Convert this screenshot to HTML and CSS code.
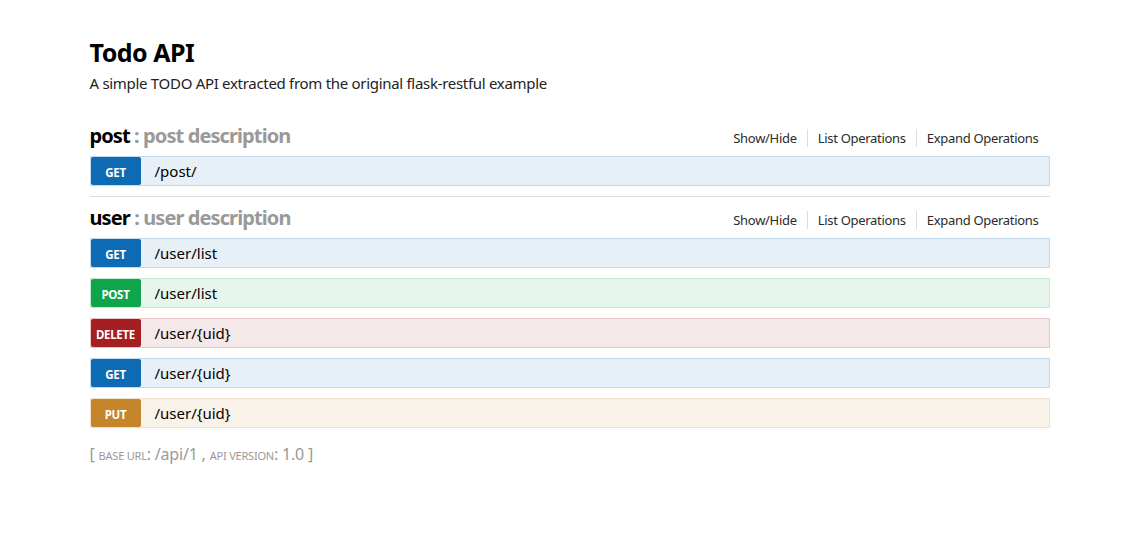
FILE: index.html
```html
<!DOCTYPE html>
<html>
<head>
<meta charset="utf-8">
<link rel="stylesheet" href="styles.css">
<title>Todo API</title>
</head>
<body>
<div class="container">
  <div class="info">
    <h1 class="info-title">Todo API</h1>
    <p class="info-desc">A simple TODO API extracted from the original flask-restful example</p>
  </div>

  <section class="resource with-sep">
    <div class="res-heading">
      <h2><span class="res-name">post</span><span class="res-desc"> : post description</span></h2>
      <ul class="res-links">
        <li>Show/Hide</li>
        <li>List Operations</li>
        <li>Expand Operations</li>
      </ul>
    </div>
    <ul class="ops">
      <li class="op get"><span class="method">GET</span><span class="path">/post/</span></li>
    </ul>
  </section>

  <section class="resource">
    <div class="res-heading">
      <h2><span class="res-name">user</span><span class="res-desc"> : user description</span></h2>
      <ul class="res-links">
        <li>Show/Hide</li>
        <li>List Operations</li>
        <li>Expand Operations</li>
      </ul>
    </div>
    <ul class="ops">
      <li class="op get"><span class="method">GET</span><span class="path">/user/list</span></li>
      <li class="op post"><span class="method">POST</span><span class="path">/user/list</span></li>
      <li class="op delete"><span class="method">DELETE</span><span class="path">/user/{uid}</span></li>
      <li class="op get"><span class="method">GET</span><span class="path">/user/{uid}</span></li>
      <li class="op put"><span class="method">PUT</span><span class="path">/user/{uid}</span></li>
    </ul>
  </section>

  <div class="footer">
    <span class="br">[</span> <span class="lbl">base url</span>: /api/1 , <span class="lbl">api version</span>: 1.0 <span class="br">]</span>
  </div>
</div>
</body>
</html>
```

FILE: styles.css
```css
html, body {
  margin: 0;
  padding: 0;
  background: #fff;
}
body {
  font-family: "Noto Sans", "Open Sans", "DejaVu Sans", sans-serif;
  color: #000;
}
.container {
  width: 960px;
  margin: 0 auto;
  padding-top: 36px;
}
.info-title {
  margin: 0;
  font-size: 25px;
  line-height: 32px;
  font-weight: bold;
  letter-spacing: -0.5px;
}
.info-desc {
  margin: 4px 0 0 0;
  font-size: 15px;
  line-height: 22px;
  color: #222;
  letter-spacing: -0.3px;
}
.resource.with-sep {
  margin-top: 28px;
  border-bottom: 1px solid #ddd;
  padding-bottom: 10px;
}
.res-heading {
  display: flex;
  align-items: flex-end;
  justify-content: space-between;
  height: 28px;
  margin-bottom: 6px;
}
.resource + .resource .res-heading {
  margin-top: 7px;
}
.res-heading h2 {
  margin: 0;
  font-size: 20px;
  line-height: 28px;
  font-weight: bold;
  letter-spacing: -0.9px;
}
.res-name { color: #000; }
.res-desc { color: #999; }
.res-links {
  list-style: none;
  margin: 0 0 3px 0;
  padding: 0 11px 0 0;
  display: flex;
  font-size: 13px;
  line-height: 18px;
  color: #2b2b2b;
  letter-spacing: -0.3px;
}
.res-links li {
  padding: 0 10px;
  border-left: 1px solid #ddd;
}
.res-links li:first-child {
  border-left: none;
}
.res-links li:last-child {
  padding-right: 0;
}
.ops {
  list-style: none;
  margin: 0;
  padding: 0;
  display: flex;
  flex-direction: column;
  gap: 10px;
}
.op {
  display: flex;
  align-items: center;
  height: 28px;
  border: 1px solid;
}
.method {
  width: 50px;
  height: 28px;
  display: flex;
  align-items: center;
  justify-content: center;
  color: #fff;
  font-size: 11.5px;
  font-weight: bold;
  border-radius: 2px;
  padding-top: 2px;
  box-sizing: border-box;
  letter-spacing: -0.3px;
}
.path {
  padding-left: 14px;
  font-size: 15px;
  color: #000;
  padding-bottom: 1px;
}
.op.get { background: #e7f0f7; border-color: #c3d9ec; }
.op.get .method { background: #0f6ab4; }
.op.post { background: #e7f6ec; border-color: #c3e8d1; }
.op.post .method { background: #10a54a; }
.op.delete { background: #f5e8e8; border-color: #e8c6c7; }
.op.delete .method { background: #a41e22; }
.op.put { background: #f9f2e9; border-color: #f0e0ca; }
.op.put .method { background: #c5862b; }

.footer {
  margin-top: 15px;
  color: #999;
  font-size: 16px;
  line-height: 22px;
  letter-spacing: -0.2px;
}
.footer .lbl {
  text-transform: uppercase;
  font-size: 11px;
}
```
